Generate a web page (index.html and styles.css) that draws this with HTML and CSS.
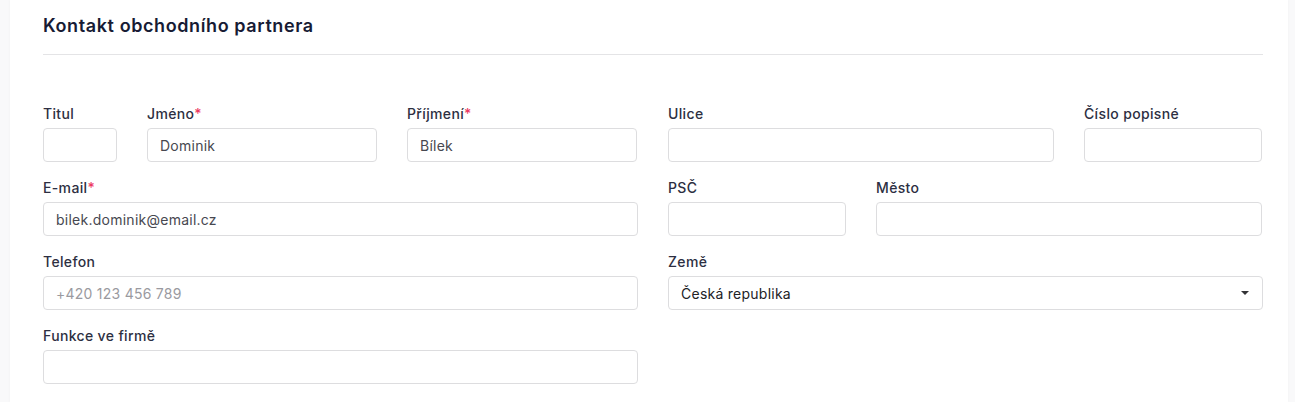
FILE: index.html
```html
<!DOCTYPE html>
<html lang="cs">
<head>
<meta charset="utf-8">
<title>Kontakt obchodního partnera</title>
<link rel="stylesheet" href="styles.css">
</head>
<body>
<div class="card">
  <h2 class="title">Kontakt obchodního partnera</h2>
  <div class="form">
    <div class="col">
      <div class="row row-name">
        <div class="field"><label>Titul</label><input type="text"></div>
        <div class="field"><label>Jméno<span class="req">*</span></label><input type="text" value="Dominik"></div>
        <div class="field"><label>Příjmení<span class="req">*</span></label><input type="text" value="Bílek"></div>
      </div>
      <div class="field"><label>E-mail<span class="req">*</span></label><input type="text" value="bilek.dominik@email.cz"></div>
      <div class="field"><label>Telefon</label><input type="text" placeholder="+420 123 456 789"></div>
      <div class="field"><label>Funkce ve firmě</label><input type="text"></div>
    </div>
    <div class="col">
      <div class="row row-street">
        <div class="field"><label>Ulice</label><input type="text"></div>
        <div class="field"><label>Číslo popisné</label><input type="text"></div>
      </div>
      <div class="row row-city">
        <div class="field"><label>PSČ</label><input type="text"></div>
        <div class="field"><label>Město</label><input type="text"></div>
      </div>
      <div class="field"><label>Země</label>
        <div class="select-wrap">
          <select><option>Česká republika</option></select>
        </div>
      </div>
    </div>
  </div>
</div>
</body>
</html>
```

FILE: styles.css
```css
* { box-sizing: border-box; }
html, body { margin: 0; padding: 0; }
body {
  background: #f9f9fa;
  font-family: Inter, "Open Sans", "Liberation Sans", sans-serif;
  height: 402px;
  overflow: hidden;
}
.card {
  margin-left: 10px;
  width: 1278px;
  min-height: 402px;
  background: #ffffff;
  box-shadow: 0 0 3px rgba(0, 0, 0, 0.04);
  padding: 12px 25px 0 33px;
}
.title {
  margin: 0;
  font-size: 18px;
  line-height: 27px;
  font-weight: 600;
  letter-spacing: 0.6px;
  color: #171b34;
  padding-bottom: 15px;
  border-bottom: 1px solid #e4e4e6;
  width: 1220px;
}
.form {
  display: grid;
  grid-template-columns: 595px 595px;
  column-gap: 30px;
  padding-top: 48px;
}
.col {
  display: flex;
  flex-direction: column;
  gap: 15px;
}
.row {
  display: grid;
  column-gap: 30px;
}
.row-name { grid-template-columns: 74px 230px 230px; }
.row-street { grid-template-columns: 386px 178px; }
.row-city { grid-template-columns: 178px 386px; }
.field {
  display: flex;
  flex-direction: column;
}
label {
  font-size: 14px;
  line-height: 21px;
  font-weight: 500;
  letter-spacing: 0.35px;
  color: #2d2f42;
  margin-bottom: 4px;
}
.req { color: #ec3a63; }
input, select {
  width: 100%;
  height: 34px;
  border: 1px solid #dddddf;
  border-radius: 4px;
  padding: 0 12px;
  font-family: inherit;
  font-size: 14px;
  letter-spacing: 0.25px;
  color: #474850;
  background: #ffffff;
  outline: none;
  margin: 0;
}
input::placeholder { color: #9a9aa0; }
.select-wrap {
  position: relative;
}
select {
  appearance: none;
  -webkit-appearance: none;
  color: #222226;
  padding-right: 30px;
}
.select-wrap::after {
  content: "";
  position: absolute;
  right: 14px;
  top: 15px;
  width: 0;
  height: 0;
  border-left: 4px solid transparent;
  border-right: 4px solid transparent;
  border-top: 4px solid #333336;
  pointer-events: none;
}
```
